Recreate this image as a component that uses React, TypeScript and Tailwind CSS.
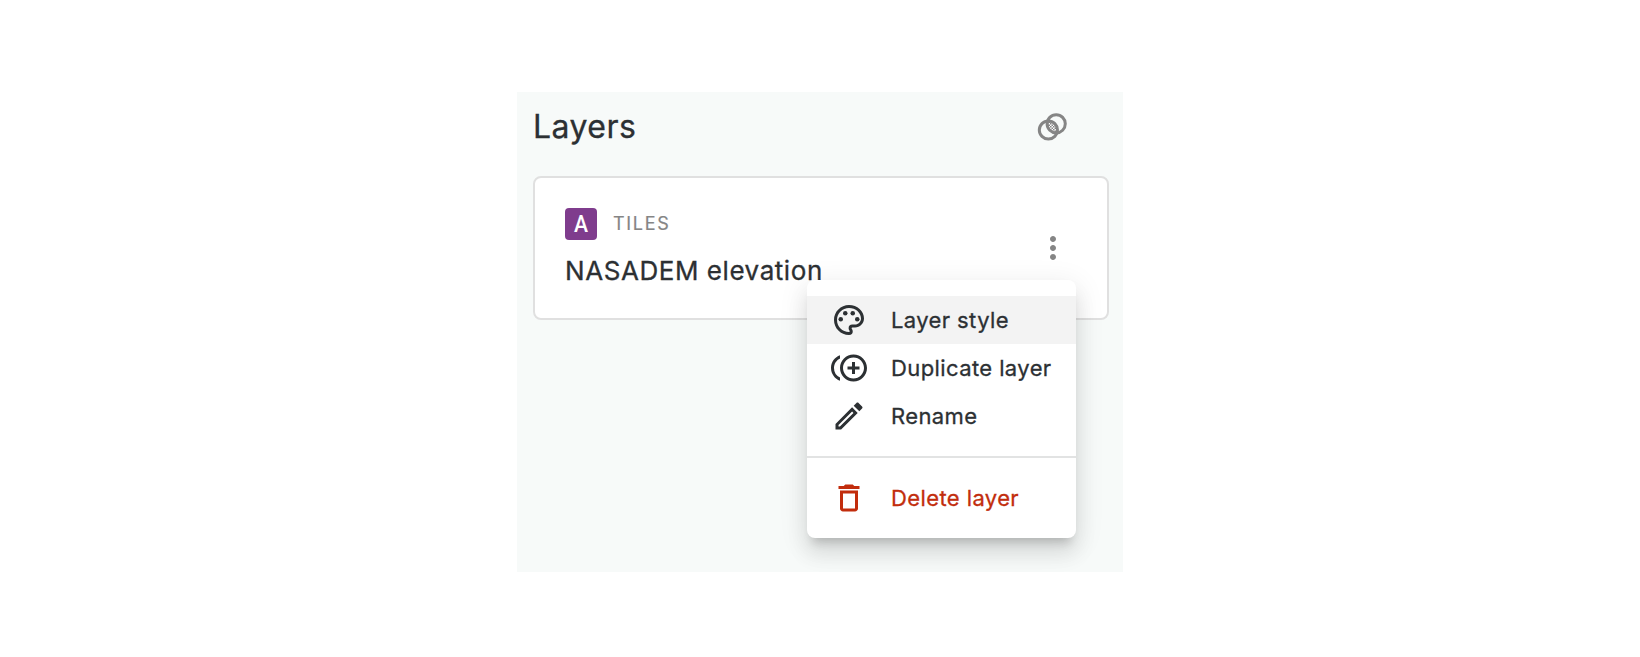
import type { ReactNode } from "react";
import {
  MdDeleteOutline,
  MdMoreVert,
  MdOutlineControlPointDuplicate,
  MdOutlineEdit,
  MdOutlinePalette,
} from "react-icons/md";

function BasemapBlendIcon() {
  return (
    <svg width="36" height="36" viewBox="0 0 36 36" fill="none">
      <defs>
        <pattern id="dots" width="3" height="3" patternUnits="userSpaceOnUse">
          <rect width="1.5" height="1.5" fill="#858585" />
          <rect x="1.5" y="1.5" width="1.5" height="1.5" fill="#858585" />
        </pattern>
        <clipPath id="left">
          <circle cx="13.4" cy="22" r="9.1" />
        </clipPath>
      </defs>
      <g clipPath="url(#left)">
        <circle cx="21.2" cy="15.8" r="9.1" fill="#fff" />
        <circle cx="21.2" cy="15.8" r="9.1" fill="url(#dots)" />
      </g>
      <circle cx="13.4" cy="22" r="9.1" stroke="#858585" strokeWidth="3" />
      <circle cx="21.2" cy="15.8" r="9.1" stroke="#858585" strokeWidth="3" />
    </svg>
  );
}

function MenuItem({ icon, label, active, danger }: { icon: ReactNode; label: string; active?: boolean; danger?: boolean }) {
  return (
    <button
      className={`flex h-12 w-full items-center gap-6 pl-6 text-left text-[22px] tracking-[0.4px] whitespace-nowrap ${
        active ? "bg-[#f3f3f3]" : ""
      } ${danger ? "text-[#c22d0d]" : "text-[#2c3033]"}`}
    >
      {icon}
      <span className="[-webkit-text-stroke:0.3px]">{label}</span>
    </button>
  );
}

export default function App() {
  return (
    <div className="h-[657px] w-full bg-white pt-[92px] pl-[517px] font-['Inter',sans-serif]">
      <section className="h-[480px] w-[606px] bg-[#f7faf9] px-4 pt-4 text-[#2c3033]">
        <header className="mr-9 flex h-9 items-center justify-between">
          <h2 className="pt-0.5 text-[32px] leading-9 tracking-[0.45px] [-webkit-text-stroke:0.3px]">Layers</h2>
          <BasemapBlendIcon />
        </header>
        <article className="relative mt-8 flex h-36 w-[576px] items-center justify-between rounded-lg border-2 border-[#e0e0e0] bg-white pr-9 pl-[30px]">
          <div>
            <div className="flex items-center gap-4">
              <span className="flex size-8 items-center justify-center rounded bg-[#7f3c8d] text-white">
                <span className="scale-x-[0.88] font-['Roboto',sans-serif] text-[24px] leading-8 font-medium">A</span>
              </span>
              <span className="text-[18px] leading-8 tracking-[1.7px] text-[#858585] [-webkit-text-stroke:0.2px]">TILES</span>
            </div>
            <h3 className="-mb-px mt-3 pt-px text-[26px] leading-9 tracking-[0.56px] [-webkit-text-stroke:0.3px]">NASADEM elevation</h3>
          </div>
          <MdMoreVert className="size-9 text-[#858585]" />
          <div className="absolute top-[102px] left-[272px] flex h-[258px] w-[269px] flex-col rounded-lg bg-white py-4 shadow-[0_10px_10px_-6px_rgba(0,0,0,0.18),0_16px_20px_2px_rgba(0,0,0,0.08),0_6px_28px_4px_rgba(0,0,0,0.07)]">
            <MenuItem active icon={<MdOutlinePalette className="size-9 shrink-0" />} label="Layer style" />
            <MenuItem icon={<MdOutlineControlPointDuplicate className="size-9 shrink-0" />} label="Duplicate layer" />
            <MenuItem icon={<MdOutlineEdit className="size-9 shrink-0" />} label="Rename" />
            <hr className="my-4 h-0.5 border-0 bg-[#e2e3e3]" />
            <MenuItem danger icon={<MdDeleteOutline className="size-9 shrink-0" />} label="Delete layer" />
          </div>
        </article>
      </section>
    </div>
  );
}
